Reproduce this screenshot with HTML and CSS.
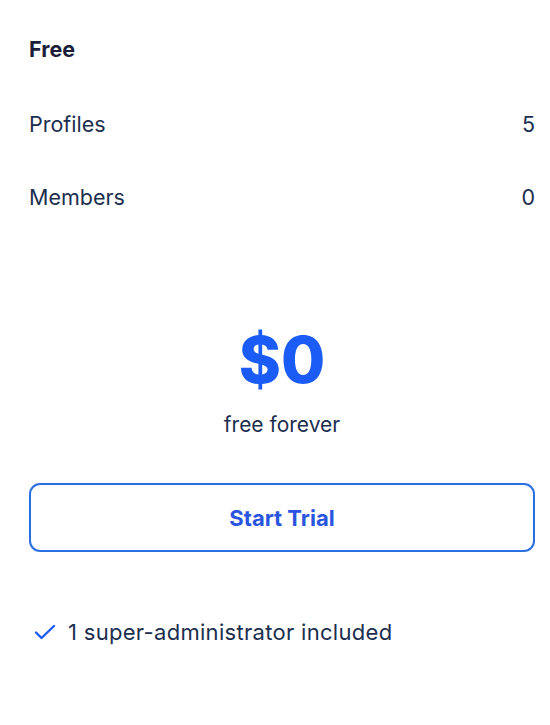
FILE: index.html
```html
<!DOCTYPE html>
<html lang="en">

<head>
    <meta charset="utf-8">
    <title>Plan</title>
    <link rel="stylesheet" href="styles.css">
</head>

<body>
    <div class="plan">
        <h2 class="plan-name">Free</h2>
        <div class="plan-row">
            <span>Profiles</span>
            <span>5</span>
        </div>
        <div class="plan-row">
            <span>Members</span>
            <span>0</span>
        </div>

        <div class="price">
            <div class="price-amount">$0</div>
            <div class="price-note">free forever</div>
        </div>

        <button class="btn-trial" type="button">Start Trial</button>

        <ul class="features">
            <li>
                <svg width="22" height="20" viewBox="0 0 22 20" fill="none">
                    <path d="M2 10.5l5.5 5.5L20 4" stroke="#1a5cf5" stroke-width="2.4" stroke-linecap="round" stroke-linejoin="round"/>
                </svg>
                1 super-administrator included
            </li>
        </ul>
    </div>
</body>

</html>
```

FILE: styles.css
```css
body {
    margin: 0;
    background-color: #ffffff;
    font-family: "Inter", "Roboto", sans-serif;
    color: #1b2f4f;
}

.plan {
    padding: 31px 15px 0 29px;
}

.plan-name {
    margin: 0;
    font-size: 21.5px;
    font-weight: 700;
    line-height: 36px;
    color: #1c1d3b;
}

.plan-row {
    display: flex;
    justify-content: space-between;
    margin-top: 41px;
    font-size: 21.5px;
    line-height: 32px;
}

.price {
    margin-top: 111px;
    text-align: center;
}

.price-amount {
    font-size: 64px;
    font-weight: 800;
    line-height: 72px;
    color: #1a5cf5;
}

.price-note {
    margin-top: 15px;
    font-size: 21px;
    line-height: 28px;
}

.btn-trial {
    display: block;
    width: 100%;
    height: 69px;
    margin-top: 44px;
    background: #ffffff;
    border: 2px solid #2b6fe3;
    border-radius: 11px;
    font-family: inherit;
    font-size: 22px;
    font-weight: 700;
    color: #2a55e0;
}

.features {
    list-style: none;
    margin: 67px 0 0 0;
    padding: 0 0 0 5px;
    font-size: 22px;
    letter-spacing: 0.3px;
}

.features li {
    display: flex;
    align-items: center;
    gap: 12px;
}
```
